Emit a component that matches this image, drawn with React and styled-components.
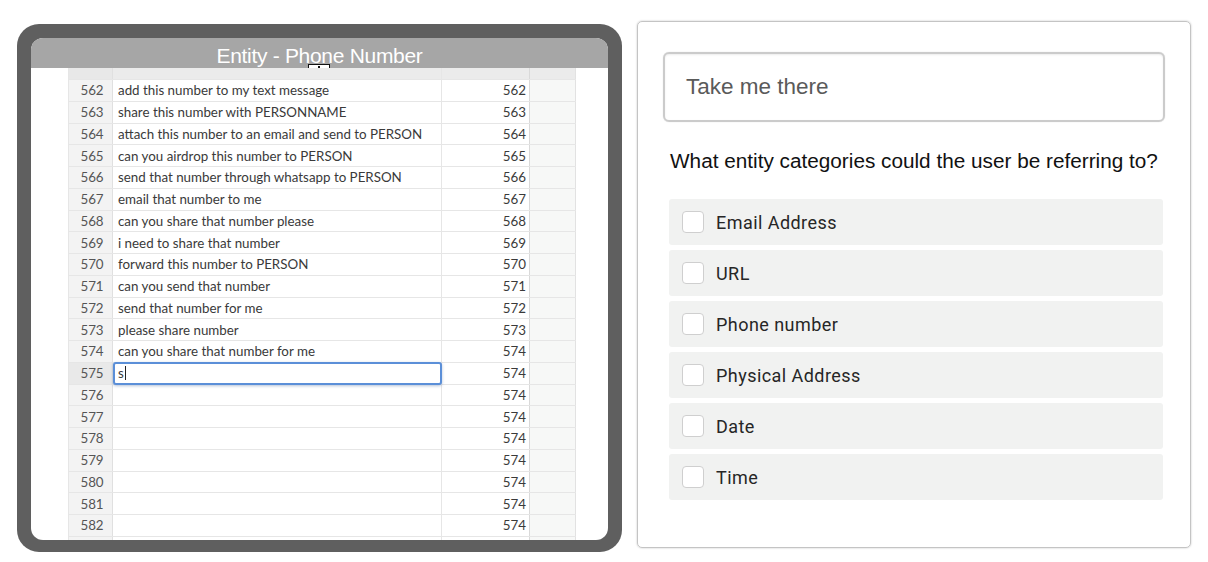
import React from "react";
import styled, { createGlobalStyle } from "styled-components";

const GlobalStyle = createGlobalStyle`
  html, body {
    margin: 0;
    padding: 0;
    background: #ffffff;
  }
  * {
    box-sizing: border-box;
  }
`;

const rows = [
  [562, "add this number to my text message", 562],
  [563, "share this number with PERSONNAME", 563],
  [564, "attach this number to an email and send to PERSON", 564],
  [565, "can you airdrop this number to PERSON", 565],
  [566, "send that number through whatsapp to PERSON", 566],
  [567, "email that number to me", 567],
  [568, "can you share that number please", 568],
  [569, "i need to share that number", 569],
  [570, "forward this number to PERSON", 570],
  [571, "can you send that number", 571],
  [572, "send that number for me", 572],
  [573, "please share number", 573],
  [574, "can you share that number for me", 574],
  [575, "s", 574, true],
  [576, "", 574],
  [577, "", 574],
  [578, "", 574],
  [579, "", 574],
  [580, "", 574],
  [581, "", 574],
  [582, "", 574]
];

const categories = [
  "Email Address",
  "URL",
  "Phone number",
  "Physical Address",
  "Date",
  "Time"
];

const Page = styled.div`
  display: flex;
  align-items: flex-start;
  gap: 15px;
  padding: 21px 0 0 17px;
  width: 1208px;
  height: 562px;
  overflow: hidden;
`;

const Frame = styled.div`
  margin-top: 3px;
  width: 605px;
  height: 528px;
  background: #5f5f5f;
  border-radius: 22px;
  padding: 14px 14px 12px;
`;

const Screen = styled.div`
  position: relative;
  height: 100%;
  background: #ffffff;
  border-radius: 12px;
  overflow: hidden;
  display: flex;
  flex-direction: column;
`;

const TitleBar = styled.div`
  height: 30px;
  flex-shrink: 0;
  background: #a6a6a6;
  color: #ffffff;
  font-family: "Liberation Sans", Arial, sans-serif;
  font-size: 21px;
  letter-spacing: -0.3px;
  line-height: 35px;
  text-align: center;
`;

const CursorMark = styled.div`
  position: absolute;
  left: 277px;
  top: 26px;
  width: 22px;
  height: 7px;
  background: #ffffff;
  border: 1.5px solid #111111;
  border-bottom: none;

  &::after {
    content: "";
    position: absolute;
    left: 9px;
    top: 1px;
    width: 2px;
    height: 4px;
    background: #111111;
  }
`;

const SheetArea = styled.div`
  flex: 1;
  overflow: hidden;
  padding-left: 37px;
`;

const Sheet = styled.div`
  width: 508px;
  font-family: Lato, "Open Sans", sans-serif;
  font-size: 13.35px;
  color: #3a3a3a;
`;

const Row = styled.div`
  display: grid;
  grid-template-columns: 45px 329px 88px 46px;
  height: ${(p) => (p.$head ? "12px" : "21.75px")};
  border-bottom: 1px solid #e6e6e6;
`;

const IndexCell = styled.div`
  background: ${(p) => (p.$head ? "#e8e8e8" : p.$active ? "#e9e9e9" : "#f3f3f3")};
  border-right: 1px solid #e0e0e0;
  border-left: 1px solid #e6e6e6;
  color: #555555;
  display: flex;
  align-items: center;
  justify-content: center;
  padding-left: 3px;
`;

const TextCell = styled.div`
  position: relative;
  background: ${(p) => (p.$head ? "#ebebeb" : "#ffffff")};
  border-right: 1px solid #e6e6e6;
  display: flex;
  align-items: center;
  padding-left: 5px;
  white-space: nowrap;
  overflow: visible;
`;

const EditBox = styled.div`
  position: absolute;
  left: 0;
  top: -1px;
  width: 329px;
  height: 23px;
  border: 2px solid #5b8fd8;
  border-radius: 3px;
  background: #ffffff;
  box-shadow: 0 1px 3px rgba(40, 80, 140, 0.35);
  display: flex;
  align-items: center;
  padding-left: 3px;
  z-index: 2;

  &::after {
    content: "";
    width: 1px;
    height: 14px;
    margin-left: 1px;
    background: #222222;
  }
`;

const NumberCell = styled.div`
  background: ${(p) => (p.$head ? "#ebebeb" : "#ffffff")};
  border-right: 1px solid #d9d9d9;
  display: flex;
  align-items: center;
  justify-content: flex-end;
  padding-right: 3px;
`;

const SpareCell = styled.div`
  background: ${(p) => (p.$head ? "#ebebeb" : "#f7f8f7")};
  border-right: 1px solid #e2e2e2;
`;

const Card = styled.div`
  width: 554px;
  height: 527px;
  border: 1.5px solid #c4c4c4;
  border-radius: 5px;
  box-shadow: 0 0 2px rgba(0, 0, 0, 0.25);
  padding: 30px 0 0 25px;
  font-family: "Liberation Sans", Arial, sans-serif;
`;

const QueryBox = styled.div`
  width: 502px;
  height: 70px;
  border: 2px solid #cbcbcb;
  border-radius: 6px;
  box-shadow: inset 0 1px 2px rgba(0, 0, 0, 0.08), 0 0 1px rgba(0, 0, 0, 0.2);
  display: flex;
  align-items: center;
  padding-left: 21px;
  font-size: 22.5px;
  color: #5a5a5a;
`;

const Question = styled.div`
  margin: 27px 0 0 7px;
  font-size: 20.75px;
  line-height: 24px;
  color: #111111;
`;

const OptionList = styled.div`
  margin: 26px 0 0 6px;
  width: 494px;
  display: flex;
  flex-direction: column;
  gap: 5px;
`;

const Option = styled.label`
  height: 46px;
  background: #f1f2f1;
  border-radius: 3px;
  display: flex;
  align-items: center;
  gap: 12px;
  padding-left: 13px;
  font-family: Roboto, "Noto Sans", sans-serif;
  font-size: 18px;
  letter-spacing: 0.45px;
  color: #262626;
`;

const Box = styled.span`
  width: 22px;
  height: 22px;
  border: 1px solid #cfcfcf;
  border-radius: 4px;
  background: #ffffff;
  flex-shrink: 0;
`;

const App = () => (
  <>
    <GlobalStyle />
    <Page>
      <Frame>
        <Screen>
          <TitleBar>Entity - Phone Number</TitleBar>
          <CursorMark />
          <SheetArea>
            <Sheet>
              <Row $head>
                <IndexCell $head />
                <TextCell $head />
                <NumberCell $head />
                <SpareCell $head />
              </Row>
              {rows.map(([id, text, num, editing]) => (
                <Row key={id}>
                  <IndexCell $active={editing}>{id}</IndexCell>
                  <TextCell>{editing ? <EditBox>{text}</EditBox> : text}</TextCell>
                  <NumberCell>{num}</NumberCell>
                  <SpareCell />
                </Row>
              ))}
              <Row>
                <IndexCell />
                <TextCell />
                <NumberCell />
                <SpareCell />
              </Row>
            </Sheet>
          </SheetArea>
        </Screen>
      </Frame>
      <Card>
        <QueryBox>Take me there</QueryBox>
        <Question>What entity categories could the user be referring to?</Question>
        <OptionList>
          {categories.map((c) => (
            <Option key={c}>
              <Box />
              {c}
            </Option>
          ))}
        </OptionList>
      </Card>
    </Page>
  </>
);

export default App;
